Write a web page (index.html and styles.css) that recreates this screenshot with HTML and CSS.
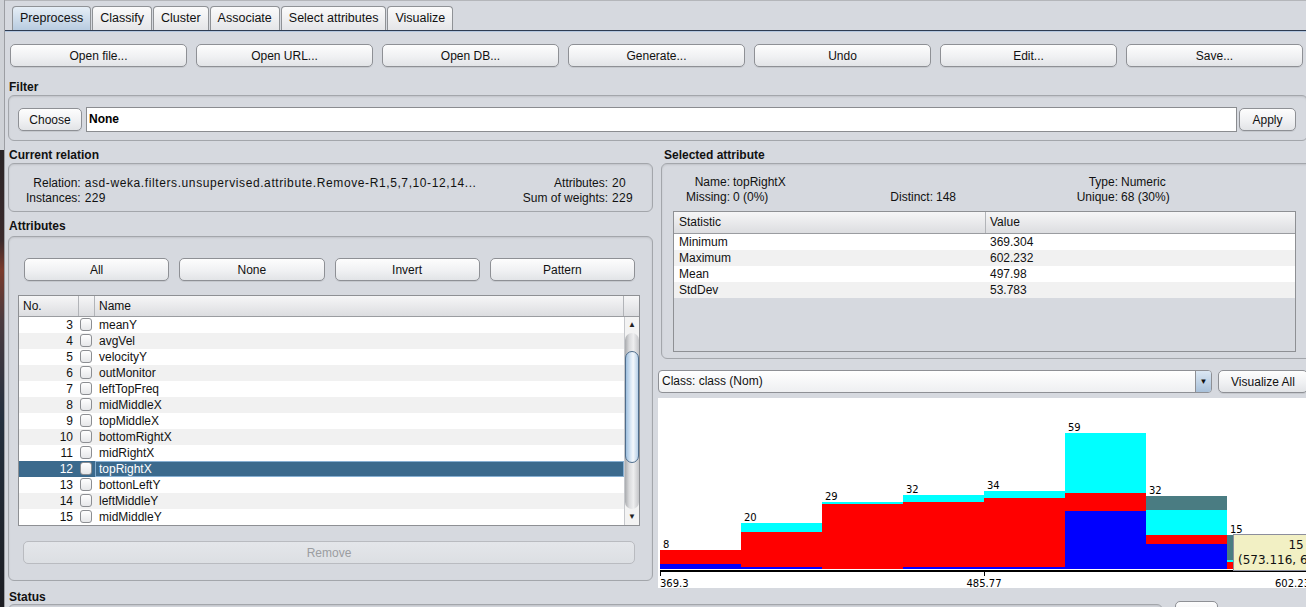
FILE: index.html
```html
<!DOCTYPE html>
<html lang="en">
<head>
    <meta charset="UTF-8">
    <title>Weka Explorer</title>
    <link rel="stylesheet" href="styles.css">
</head>
<body>
    <div class="edge"></div>
    <div class="window">
        <div class="tabbar">
            <span class="tab active">Preprocess</span>
            <span class="tab">Classify</span>
            <span class="tab">Cluster</span>
            <span class="tab">Associate</span>
            <span class="tab">Select attributes</span>
            <span class="tab">Visualize</span>
        </div>

        <div class="toolbar">
            <button class="btn">Open file...</button>
            <button class="btn">Open URL...</button>
            <button class="btn">Open DB...</button>
            <button class="btn">Generate...</button>
            <button class="btn">Undo</button>
            <button class="btn">Edit...</button>
            <button class="btn">Save...</button>
        </div>

        <div class="group-label filter-label">Filter</div>
        <div class="panel filter">
            <button class="btn choose">Choose</button>
            <div class="field">None</div>
            <button class="btn apply">Apply</button>
        </div>

        <div class="columns">
            <div class="col-left">
                <div class="group-label">Current relation</div>
                <div class="panel relation">
                    <span class="lab">Relation:</span><span class="val rel-name">asd-weka.filters.unsupervised.attribute.Remove-R1,5,7,10-12,14...</span>
                    <span class="lab">Attributes:</span><span class="val">20</span>
                    <span class="lab">Instances:</span><span class="val">229</span>
                    <span class="lab">Sum of weights:</span><span class="val">229</span>
                </div>

                <div class="group-label attr-label">Attributes</div>
                <div class="panel attributes">
                    <div class="select-btns">
                        <button class="btn">All</button>
                        <button class="btn">None</button>
                        <button class="btn">Invert</button>
                        <button class="btn">Pattern</button>
                    </div>
                    <div class="attr-table">
                        <div class="attr-head">
                            <span class="cell">No.</span>
                            <span class="cell"></span>
                            <span class="cell">Name</span>
                            <span class="cell corner"></span>
                        </div>
                        <div class="attr-body">
                            <div class="attr-rows">
                                <div class="attr-row"><span class="no">3</span><span class="chk-cell"><i class="chk"></i></span><span class="name">meanY</span></div>
                                <div class="attr-row"><span class="no">4</span><span class="chk-cell"><i class="chk"></i></span><span class="name">avgVel</span></div>
                                <div class="attr-row"><span class="no">5</span><span class="chk-cell"><i class="chk"></i></span><span class="name">velocityY</span></div>
                                <div class="attr-row"><span class="no">6</span><span class="chk-cell"><i class="chk"></i></span><span class="name">outMonitor</span></div>
                                <div class="attr-row"><span class="no">7</span><span class="chk-cell"><i class="chk"></i></span><span class="name">leftTopFreq</span></div>
                                <div class="attr-row"><span class="no">8</span><span class="chk-cell"><i class="chk"></i></span><span class="name">midMiddleX</span></div>
                                <div class="attr-row"><span class="no">9</span><span class="chk-cell"><i class="chk"></i></span><span class="name">topMiddleX</span></div>
                                <div class="attr-row"><span class="no">10</span><span class="chk-cell"><i class="chk"></i></span><span class="name">bottomRightX</span></div>
                                <div class="attr-row"><span class="no">11</span><span class="chk-cell"><i class="chk"></i></span><span class="name">midRightX</span></div>
                                <div class="attr-row selected"><span class="no">12</span><span class="chk-cell"><i class="chk"></i></span><span class="name">topRightX</span></div>
                                <div class="attr-row"><span class="no">13</span><span class="chk-cell"><i class="chk"></i></span><span class="name">bottonLeftY</span></div>
                                <div class="attr-row"><span class="no">14</span><span class="chk-cell"><i class="chk"></i></span><span class="name">leftMiddleY</span></div>
                                <div class="attr-row"><span class="no">15</span><span class="chk-cell"><i class="chk"></i></span><span class="name">midMiddleY</span></div>
                            </div>
                            <div class="vscroll">
                                <div class="arrow">&#9650;</div>
                                <div class="track"><div class="thumb"></div></div>
                                <div class="arrow">&#9660;</div>
                            </div>
                        </div>
                    </div>
                    <button class="btn remove" disabled>Remove</button>
                </div>
            </div>

            <div class="col-right">
                <div class="group-label sel-label">Selected attribute</div>
                <div class="panel selected-attr">
                    <div class="info">
                        <span class="lab">Name:</span><span class="val">topRightX</span>
                        <span></span><span></span>
                        <span class="lab">Type:</span><span class="val">Numeric</span>
                        <span class="lab">Missing:</span><span class="val">0 (0%)</span>
                        <span class="lab">Distinct:</span><span class="val">148</span>
                        <span class="lab">Unique:</span><span class="val">68 (30%)</span>
                    </div>
                    <div class="stats">
                        <div class="stats-head"><span>Statistic</span><span>Value</span></div>
                        <div class="stats-row"><span>Minimum</span><span>369.304</span></div>
                        <div class="stats-row"><span>Maximum</span><span>602.232</span></div>
                        <div class="stats-row"><span>Mean</span><span>497.98</span></div>
                        <div class="stats-row"><span>StdDev</span><span>53.783</span></div>
                    </div>
                </div>

                <div class="class-row">
                    <div class="combo"><span class="combo-text">Class: class (Nom)</span><span class="combo-arrow">&#9660;</span></div>
                    <button class="btn vis-all">Visualize All</button>
                </div>

                <div class="histogram">
                    <svg width="650" height="190" viewBox="0 0 650 190">
                        <g shape-rendering="crispEdges">
                            <rect x="2" y="152" width="81" height="14" fill="#ff0000"/>
                            <rect x="2" y="166" width="81" height="5" fill="#0000ff"/>

                            <rect x="83" y="125" width="81" height="9" fill="#00ffff"/>
                            <rect x="83" y="134" width="81" height="35" fill="#ff0000"/>
                            <rect x="83" y="169" width="81" height="2" fill="#0000ff"/>

                            <rect x="164" y="104" width="81" height="2" fill="#00ffff"/>
                            <rect x="164" y="106" width="81" height="65" fill="#ff0000"/>

                            <rect x="245" y="97" width="81" height="7" fill="#00ffff"/>
                            <rect x="245" y="104" width="81" height="65" fill="#ff0000"/>
                            <rect x="245" y="169" width="81" height="2" fill="#0000ff"/>

                            <rect x="326" y="93" width="81" height="7" fill="#00ffff"/>
                            <rect x="326" y="100" width="81" height="69" fill="#ff0000"/>
                            <rect x="326" y="169" width="81" height="2" fill="#0000ff"/>

                            <rect x="407" y="35" width="81" height="60" fill="#00ffff"/>
                            <rect x="407" y="95" width="81" height="18" fill="#ff0000"/>
                            <rect x="407" y="113" width="81" height="58" fill="#0000ff"/>

                            <rect x="488" y="98" width="81" height="14" fill="#4a7c82"/>
                            <rect x="488" y="112" width="81" height="25" fill="#00ffff"/>
                            <rect x="488" y="137" width="81" height="9" fill="#ff0000"/>
                            <rect x="488" y="146" width="81" height="25" fill="#0000ff"/>

                            <rect x="569" y="137" width="81" height="25" fill="#4a7c82"/>
                            <rect x="569" y="162" width="81" height="2" fill="#00ffff"/>
                            <rect x="569" y="164" width="81" height="7" fill="#ff0000"/>

                            <rect x="2" y="172" width="648" height="2" fill="#000"/>
                            <rect x="2" y="172" width="1" height="6" fill="#000"/>
                            <rect x="326" y="172" width="1" height="6" fill="#000"/>
                        </g>
                        <g class="counts">
                            <text x="5" y="150">8</text>
                            <text x="86" y="123">20</text>
                            <text x="167" y="102">29</text>
                            <text x="248" y="95">32</text>
                            <text x="329" y="91">34</text>
                            <text x="410" y="33">59</text>
                            <text x="491" y="96">32</text>
                            <text x="572" y="135">15</text>
                        </g>
                        <g class="counts">
                            <text x="2" y="188.5">369.3</text>
                            <text x="326" y="188.5" text-anchor="middle">485.77</text>
                            <text x="652" y="188.5" text-anchor="end">602.23</text>
                        </g>
                    </svg>
                    <div class="tooltip">15<br>(573.116, 602.232]</div>
                </div>
            </div>
        </div>

        <div class="group-label status-label">Status</div>
        <div class="status-row">
            <div class="panel status"></div>
            <button class="btn log"></button>
        </div>
    </div>
</body>
</html>
```

FILE: styles.css
```css
* { box-sizing: border-box; }
html, body {
    margin: 0;
    height: 607px;
    overflow: hidden;
}
body {
    font-family: "Liberation Sans", Arial, sans-serif;
    font-size: 12px;
    color: #111;
    background: #d6d9df;
    display: flex;
}
.edge {
    width: 5px;
    flex: none;
    border-right: 1px solid #9c9ea3;
    background: linear-gradient(#cfd2d7 0, #cfd2d7 150px, #2b2527 150px, #3a2a2c 240px, #7a3a2c 270px, #4a3a3e 320px, #24303e 420px, #1c1d22 100%);
}
.window {
    width: 1313px;
    flex: none;
}

/* tabs */
.tabbar {
    height: 31px;
    border-top: 1px solid #b4b6ba;
    border-bottom: 1px solid #2e3c52;
    box-shadow: 0 1px 0 #b3c6de;
    padding: 5px 0 0 7px;
    display: flex;
    align-items: flex-end;
}
.tab {
    height: 24px;
    padding: 0 7px;
    line-height: 23px;
    font-size: 12.5px;
    border: 1px solid #8f9296;
    border-bottom: none;
    border-radius: 4px 4px 0 0;
    background: linear-gradient(#fbfbfb, #e4e5e8);
    margin-right: 1px;
}
.tab.active { background: linear-gradient(#e6eef6, #b8cce0); }

/* buttons */
.btn {
    height: 23px;
    margin: 0;
    padding: 0 4px;
    font: inherit;
    color: #111;
    text-align: center;
    line-height: 22px;
    border: 1px solid #8e9095;
    border-radius: 5px;
    background: linear-gradient(#fdfdfd, #f0f1f3 55%, #e2e4e7);
    box-shadow: 0 1px 0 rgba(0, 0, 0, 0.08);
}
.btn:disabled {
    color: #9b9da1;
    border-color: #b9bbc0;
    background: linear-gradient(#e4e6ea, #dcdfe3);
    box-shadow: none;
}
.toolbar {
    display: grid;
    grid-template-columns: repeat(7, 177px);
    gap: 9px;
    margin: 13px 0 0 5px;
}

.group-label {
    font-weight: bold;
    height: 14px;
    line-height: 14px;
    padding-left: 4px;
}
.filter-label { margin-top: 13px; }

.panel {
    border: 1px solid #a3a6ab;
    border-radius: 6px;
    background: #d6d9df;
    box-shadow: inset 0 1px 2px rgba(0, 0, 0, 0.1);
}

/* filter */
.filter {
    margin: 1px 10px 0 3px;
    padding: 11px 11px 8px 9px;
    display: flex;
    align-items: center;
}
.choose { width: 64px; }
.field {
    flex: 1;
    height: 25px;
    margin: 0 2px 0 4px;
    padding-left: 2px;
    line-height: 23px;
    font-weight: bold;
    color: #000;
    background: #fff;
    border: 1px solid #8a8c90;
}
.apply { width: 57px; }

/* two columns */
.columns {
    display: grid;
    grid-template-columns: 645px 1fr;
    column-gap: 5px;
    margin: 7px 0 0 3px;
    height: 440px;
}
.col-left .group-label { padding-left: 1px; margin-bottom: 1px; }

.relation {
    height: 49px;
    padding: 12px 19px 0 17px;
    display: grid;
    grid-template-columns: auto 1fr auto auto;
    align-content: start;
    column-gap: 4px;
    line-height: 15px;
}
.lab { text-align: right; }
.relation .val { letter-spacing: 0.3px; }
.relation .rel-name { letter-spacing: 0.6px; white-space: nowrap; }

.attr-label { margin-top: 7px; margin-bottom: 3px !important; }
.attributes {
    height: 345px;
    padding-top: 21px;
}
.select-btns {
    display: grid;
    grid-template-columns: repeat(4, 1fr);
    gap: 10px;
    margin: 0 17px 0 15px;
}

/* attribute table */
.attr-table {
    margin: 14px 12px 0 9px;
    border: 1px solid #8e9094;
    background: #fff;
}
.attr-head {
    display: grid;
    grid-template-columns: 60px 16px 1fr 15px;
    height: 21px;
    border-bottom: 1px solid #9a9ca0;
    background: linear-gradient(#f6f6f7, #dcdde0);
}
.attr-head .cell {
    border-right: 1px solid #b2b4b8;
    padding-left: 4px;
    line-height: 20px;
}
.attr-head .corner { border-right: none; }
.attr-body {
    display: flex;
    height: 208px;
}
.attr-rows { flex: 1; }
.attr-row {
    display: grid;
    grid-template-columns: 60px 16px 1fr;
    height: 16px;
    line-height: 16px;
}
.attr-row:nth-child(even) { background: #f1f1f1; }
.attr-row .no { text-align: right; padding-right: 6px; }
.attr-row .name { padding-left: 4px; }
.chk {
    display: block;
    width: 12px;
    height: 13px;
    margin: 1px 0 0 1px;
    border: 1px solid #8c8e92;
    border-radius: 3px;
    background: linear-gradient(#ffffff, #e6e7e9);
}
.attr-row.selected { background: #3b6a8d; color: #fff; }
.attr-row.selected .name { border: 1px solid #86afd2; line-height: 14px; padding-left: 3px; }

.vscroll {
    width: 15px;
    display: flex;
    flex-direction: column;
    background: #f3f3f3;
    border-left: 1px solid #c6c8cc;
}
.arrow {
    height: 16px;
    font-size: 8px;
    line-height: 16px;
    text-align: center;
    color: #222;
}
.track {
    flex: 1;
    padding-top: 18px;
    border-radius: 7px;
    background: linear-gradient(to right, #a9abae, #d9dadc 30%, #eeeeef 60%, #c4c5c8);
}
.thumb {
    height: 112px;
    border: 1px solid #4f6d8c;
    border-radius: 7px;
    background: linear-gradient(to right, #9fc0df, #dce9f6 40%, #f4f8fc 60%, #b6cfe7);
}
.remove {
    display: block;
    width: 612px;
    margin: 15px 0 0 14px;
}

/* selected attribute */
.sel-label { padding-left: 6px; margin-bottom: 1px; }
.selected-attr {
    margin-left: 3px;
    height: 196px;
    padding: 11px 21px 0 11px;
}
.info {
    display: grid;
    grid-template-columns: 57px 153px 44px 125px 54px auto;
    column-gap: 3px;
    line-height: 15px;
}
.stats {
    margin-top: 6px;
    height: 141px;
    border: 1px solid #8e9094;
    background: #d6d9df;
}
.stats-head, .stats-row {
    display: grid;
    grid-template-columns: 311px 1fr;
}
.stats-head {
    height: 22px;
    line-height: 21px;
    border-bottom: 1px solid #9a9ca0;
    background: linear-gradient(#f6f6f7, #dcdde0);
}
.stats-head span { padding-left: 5px; }
.stats-head span + span { border-left: 1px solid #b2b4b8; padding-left: 4px; }
.stats-row {
    height: 16px;
    line-height: 16px;
    background: #fff;
}
.stats-row:nth-child(odd) { background: #f1f1f1; }
.stats-row span { padding-left: 5px; }

.class-row {
    display: flex;
    gap: 6px;
    margin-top: 11px;
}
.combo {
    width: 554px;
    height: 23px;
    display: flex;
    border: 1px solid #8e9095;
    border-radius: 4px;
    background: linear-gradient(#ffffff, #eeeff1);
    overflow: hidden;
}
.combo-text { flex: 1; padding-left: 3px; line-height: 21px; }
.combo-arrow {
    width: 16px;
    font-size: 8px;
    line-height: 21px;
    text-align: center;
    border-left: 1px solid #8e9095;
    background: linear-gradient(#dbe7f3, #a9c1da);
}
.vis-all { width: 90px; }

/* histogram */
.histogram {
    position: relative;
    width: 650px;
    height: 190px;
    margin-top: 5px;
    background: #fff;
}
.histogram svg { display: block; }
.counts text {
    font-family: "DejaVu Sans", sans-serif;
    font-size: 10px;
    fill: #000;
}
.tooltip {
    position: absolute;
    left: 575px;
    top: 136px;
    padding: 3px 4px;
    font-family: "DejaVu Sans", sans-serif;
    font-size: 12px;
    line-height: 14.5px;
    text-align: center;
    white-space: nowrap;
    color: #111;
    background: #f2f0c4;
    border: 1px solid #8c8e9c;
}

/* status */
.status-label { margin-top: 2px; }
.status-row {
    display: flex;
    margin-left: 3px;
}
.status {
    width: 1155px;
    height: 30px;
}
.log {
    width: 43px;
    height: 25px;
    margin: -3px 0 0 12px;
}
```
